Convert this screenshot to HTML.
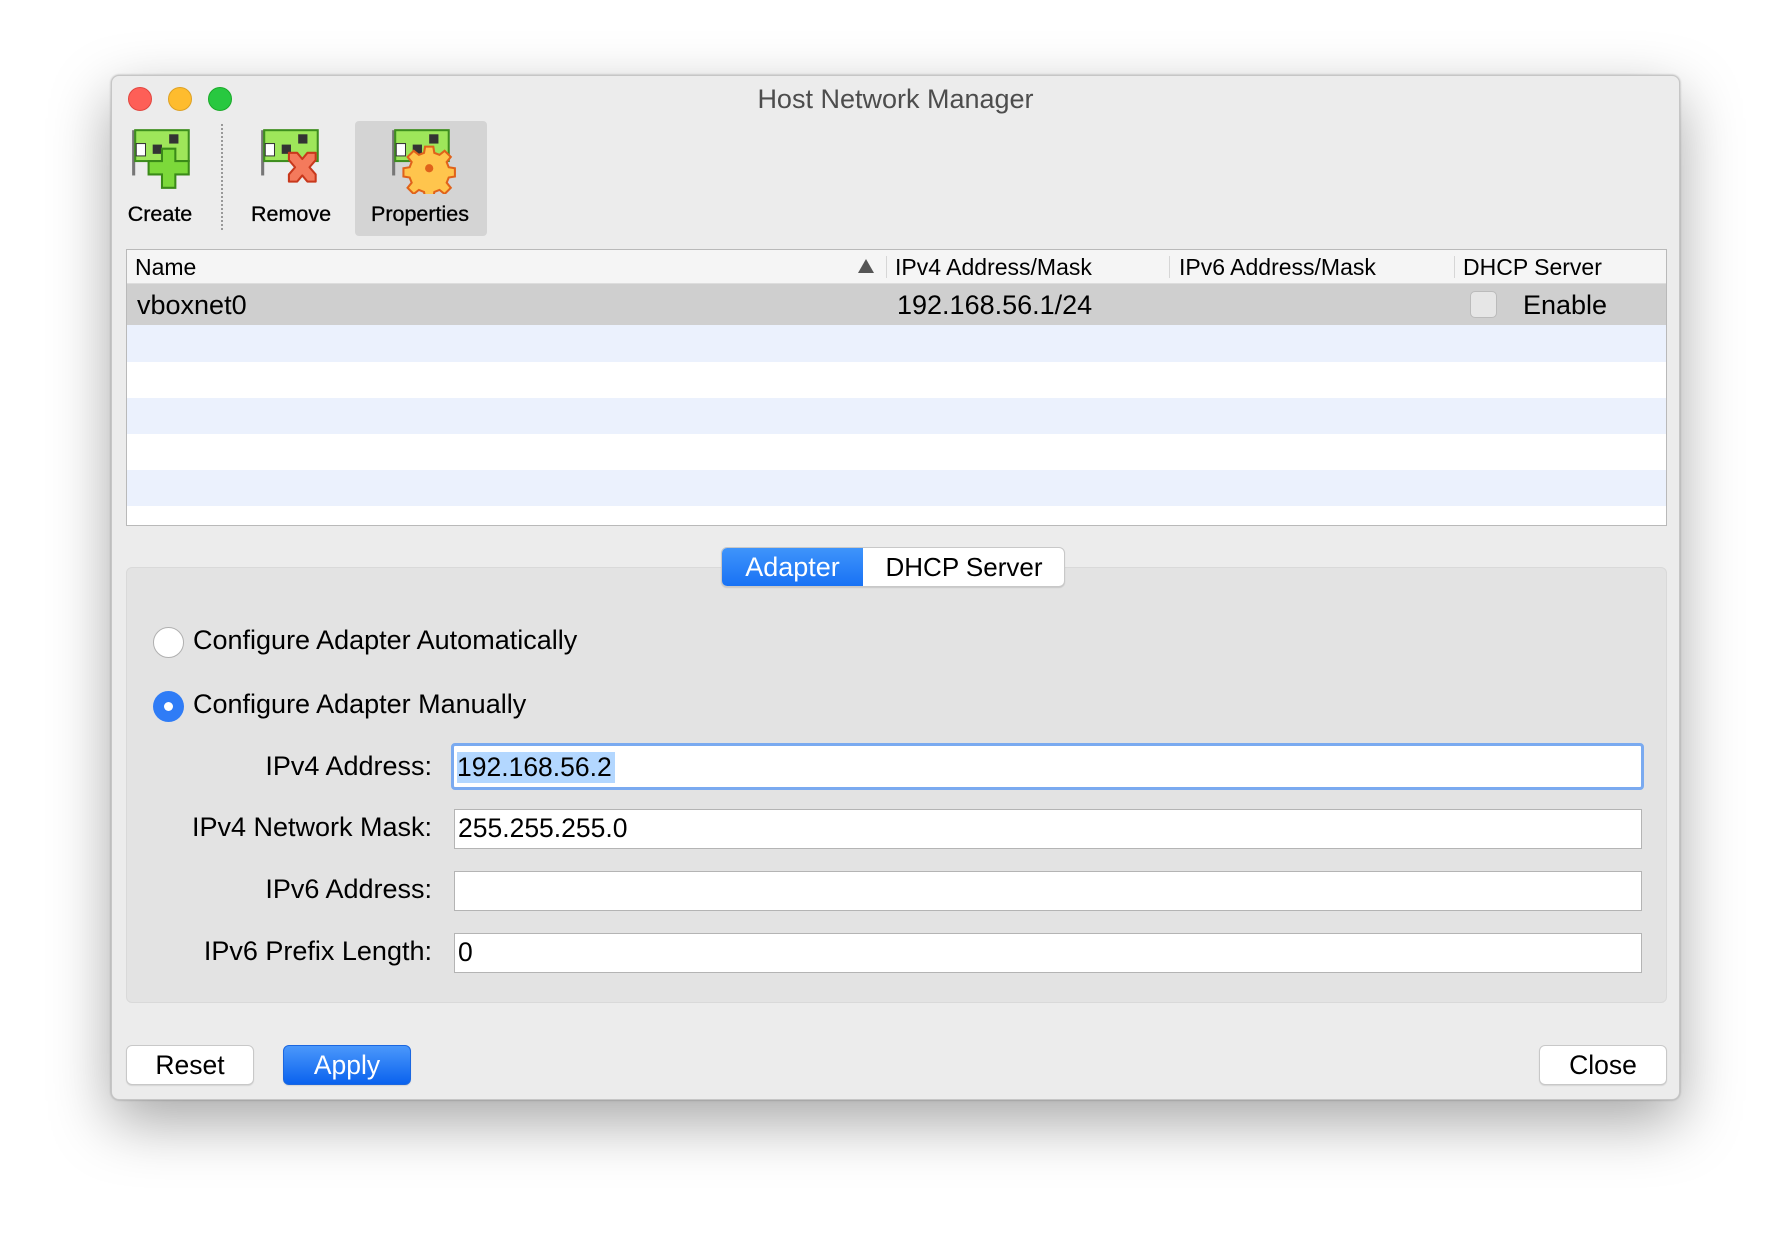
<!DOCTYPE html>
<html><head><meta charset="utf-8"><style>
*{margin:0;padding:0;box-sizing:border-box}
body{width:1792px;height:1248px;background:#fff;font-family:"Liberation Sans",sans-serif;position:relative;overflow:hidden;color:#000}
.win{position:absolute;left:111px;top:75px;width:1569px;height:1025px;background:#ececec;border-radius:8px;border:1px solid #c6c6c6;box-shadow:0 22px 60px rgba(0,0,0,.35),0 0 2px rgba(0,0,0,.3)}
.a{position:absolute}
.title{left:0;right:0;top:8px;text-align:center;font-size:27px;color:#4d4d4d}
.tl{width:24px;height:24px;border-radius:50%;top:11px}
.lbl{font-size:21.5px;text-align:center;width:140px;-webkit-text-stroke:0.3px #000}
.table{left:14px;top:173px;width:1541px;height:277px;background:#fff;border:1px solid #b9b9b9;overflow:hidden}
.hdr{left:0;top:0;right:0;height:34px;background:#f5f5f5;border-bottom:1px solid #ddd;font-size:23px}
.sep{width:1px;height:22px;top:6px;background:#d6d6d6}
.row{left:0;right:0}
.panel{left:14px;top:491px;width:1541px;height:436px;background:#e3e3e3;border:1px solid #d9d9d9;border-radius:6px}
.t27{font-size:27px}
.field{left:342px;width:1188px;height:40px;background:#fff;border:1px solid #b4b4b4;font-size:26.5px;padding-left:3px;line-height:37px}
.lab{width:300px;text-align:right;font-size:27px;left:20px}
.btn{height:40px;width:128px;border-radius:6px;background:#fff;border:1px solid #c8c8c8;box-shadow:0 1px 1px rgba(0,0,0,.1);text-align:center;font-size:26.5px;line-height:38px;top:969px}
</style></head><body>
<div class="win">
 <div class="a title">Host Network Manager</div>
 <div class="a tl" style="left:16px;background:#fe5f57;border:1px solid #e2463f"></div>
 <div class="a tl" style="left:56px;background:#febc2e;border:1px solid #dea123"></div>
 <div class="a tl" style="left:96px;background:#28c840;border:1px solid #1aab29"></div>

 <div class="a" style="left:243px;top:45px;width:132px;height:115px;background:#d4d4d4;border-radius:4px"></div>
 <div class="a" style="left:109px;top:48px;height:106px;border-left:2px dotted #999"></div>

 <svg class="a" style="left:16px;top:48px" width="70" height="70" viewBox="0 0 68 68">
  <path d="M4 6h3v44H4z" fill="#777"/><rect x="7" y="6" width="52" height="30" fill="#9ee65a" stroke="#3e8e1e" stroke-width="2"/>
  <rect x="8" y="19" width="9" height="12" fill="#fff" stroke="#333"/><rect x="40" y="10" width="9" height="9" fill="#333"/><rect x="24" y="20" width="9" height="9" fill="#333"/>
  <path d="M33 24h13v12h13v13H46v13H33V49H20V36h13z" fill="#7cd93a" stroke="#3a8a18" stroke-width="2"/>
 </svg>
 <svg class="a" style="left:145px;top:48px" width="70" height="70" viewBox="0 0 68 68">
  <path d="M4 6h3v44H4z" fill="#777"/><rect x="7" y="6" width="52" height="30" fill="#9ee65a" stroke="#3e8e1e" stroke-width="2"/>
  <rect x="8" y="19" width="9" height="12" fill="#fff" stroke="#333"/><rect x="40" y="10" width="9" height="9" fill="#333"/><rect x="24" y="20" width="9" height="9" fill="#333"/>
  <path d="M31 28l8 0 5 6 5-6 8 0 0 7-6 7 6 7 0 7-8 0-5-6-5 6-8 0 0-7 6-7-6-7z" fill="#f47a5c" stroke="#c8381c" stroke-width="2" stroke-linejoin="round"/>
 </svg>
 <svg class="a" style="left:276px;top:48px" width="70" height="70" viewBox="0 0 68 68">
  <path d="M4 6h3v44H4z" fill="#777"/><rect x="7" y="6" width="52" height="30" fill="#9ee65a" stroke="#3e8e1e" stroke-width="2"/>
  <rect x="8" y="19" width="9" height="12" fill="#fff" stroke="#333"/><rect x="40" y="10" width="9" height="9" fill="#333"/><rect x="24" y="20" width="9" height="9" fill="#333"/>
  <g transform="translate(40,43)"><g fill="#ffc54d" stroke="#e0621a" stroke-width="2">
   <path d="M-4-21h8l1 6 5 2 5-4 6 6-4 5 2 5 6 1v8l-6 1-2 5 4 5-6 6-5-4-5 2-1 6h-8l-1-6-5-2-5 4-6-6 4-5-2-5-6-1v-8l6-1 2-5-4-5 6-6 5 4 5-2z"/></g>
   <circle r="4" fill="#e0621a"/></g>
 </svg>
 <div class="a lbl" style="left:-22px;top:126px">Create</div>
 <div class="a lbl" style="left:109px;top:126px">Remove</div>
 <div class="a lbl" style="left:238px;top:126px">Properties</div>

 <div class="a table">
  <div class="a hdr">
   <div class="a" style="left:8px;top:4px">Name</div>
   <svg class="a" style="left:731px;top:9px" width="16" height="14"><path d="M8 0L16 14H0z" fill="#555"/></svg>
   <div class="a sep" style="left:759px"></div>
   <div class="a" style="left:768px;top:4px">IPv4 Address/Mask</div>
   <div class="a sep" style="left:1042px"></div>
   <div class="a" style="left:1052px;top:4px">IPv6 Address/Mask</div>
   <div class="a sep" style="left:1327px"></div>
   <div class="a" style="left:1336px;top:4px">DHCP Server</div>
  </div>
  <div class="a row" style="top:34px;height:41px;background:#cfcfcf">
   <div class="a t27" style="left:10px;top:6px">vboxnet0</div>
   <div class="a t27" style="left:770px;top:6px">192.168.56.1/24</div>
   <div class="a" style="left:1343px;top:7px;width:27px;height:27px;border-radius:5px;background:#e6e6e6;border:1px solid #bbb"></div>
   <div class="a t27" style="left:1396px;top:6px">Enable</div>
  </div>
  <div class="a row" style="top:75px;height:37px;background:#ebf1fd"></div>
  <div class="a row" style="top:148px;height:36px;background:#ebf1fd"></div>
  <div class="a row" style="top:220px;height:36px;background:#ebf1fd"></div>
 </div>

 <div class="a panel"></div>
 <div class="a" style="left:609px;top:471px;width:344px;height:40px;border-radius:6px;background:#fff;border:1px solid #c8c8c8;box-shadow:0 1px 1px rgba(0,0,0,.12);overflow:hidden">
  <div class="a t27" style="left:0;top:0;width:141px;height:40px;background:linear-gradient(#3f94fb,#1670f4);color:#fff;text-align:center;line-height:38px">Adapter</div>
  <div class="a" style="left:141px;top:0;width:202px;text-align:center;line-height:38px;font-size:26px">DHCP Server</div>
 </div>

 <div class="a" style="left:41px;top:551px;width:31px;height:31px;border-radius:50%;background:#fff;border:1px solid #b0b0b0"></div>
 <div class="a t27" style="left:81px;top:549px">Configure Adapter Automatically</div>
 <div class="a" style="left:41px;top:615px;width:31px;height:31px;border-radius:50%;background:#2f7cf6"><div class="a" style="left:11px;top:11px;width:9px;height:9px;border-radius:50%;background:#fff"></div></div>
 <div class="a t27" style="left:81px;top:613px">Configure Adapter Manually</div>

 <div class="a lab" style="top:675px">IPv4 Address:</div>
 <div class="a" style="left:339px;top:667px;width:1193px;height:47px;border:3px solid #7aaaf0;border-radius:4px;background:#fff"><div class="a" style="left:3px;top:6px;width:158px;height:31px;background:#b3d7ff"></div><div class="a" style="left:3px;top:4px;font-size:26.5px;line-height:35px">192.168.56.2</div></div>
 <div class="a lab" style="top:736px">IPv4 Network Mask:</div>
 <div class="a field" style="top:733px">255.255.255.0</div>
 <div class="a lab" style="top:798px">IPv6 Address:</div>
 <div class="a field" style="top:795px"></div>
 <div class="a lab" style="top:860px">IPv6 Prefix Length:</div>
 <div class="a field" style="top:857px">0</div>

 <div class="a btn" style="left:14px">Reset</div>
 <div class="a btn" style="left:171px;background:linear-gradient(#4b98fb,#0a62ee);color:#fff;border-color:#1b67e0">Apply</div>
 <div class="a btn" style="left:1427px">Close</div>
</div>
</body></html>
